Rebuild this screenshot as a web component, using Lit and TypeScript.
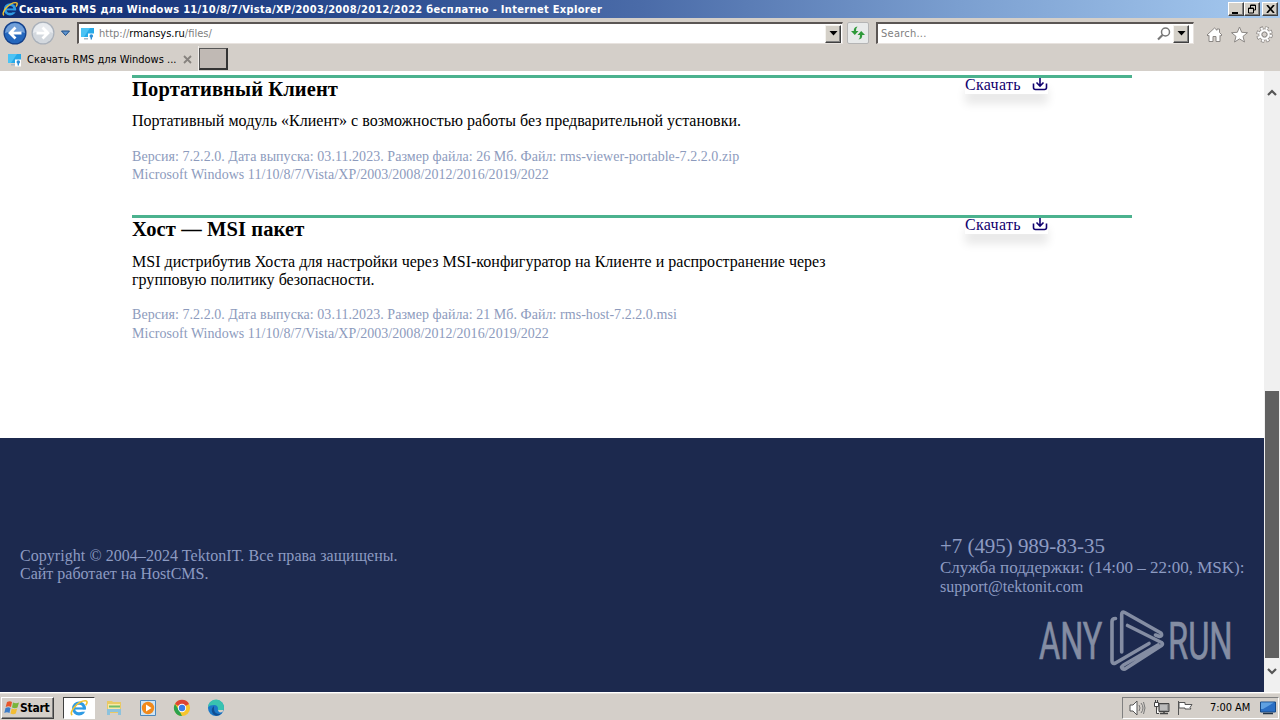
import { LitElement, html, svg, css } from "lit";
import { customElement } from "lit/decorators.js";

const ie = (s: number) => html`<svg width=${s} height=${s} viewBox="0 0 20 20">
  <circle cx="10" cy="10.500" r="6" fill="none" stroke="#2f9be4" stroke-width="3.500"/>
  <path d="M11 11.500h8v2.600h-8z" fill=${s > 16 ? "#fff" : "#12307a"}/><path d="M5 9.300h12.500v2.400H5z" fill="#2f9be4"/>
  <path d="M2.500 18C-2 15 9 2 17 2c3 0 2 3 .5 5" fill="none" stroke="#f2c230" stroke-width="1.800"/></svg>`;

const site = html`<svg width="16" height="16" viewBox="0 0 16 16">
  <path d="M1 2h13v9H1z" fill="#26a9e8"/><path d="M1 2h9L4 11H1z" fill="#4cc3f4"/><path d="M4 12h4v1.500H4z" fill="#a9b8c6"/>
  <path d="M8 7.500h6v7H8z" fill="#fff"/><circle cx="11.300" cy="10" r="1.800" fill="#2d8fd8"/><path d="M10.600 11h1.400v2.500h-1.400z" fill="#2d8fd8"/></svg>`;

const dropArrow = html`<svg width="9" height="5" viewBox="0 0 9 5"><path d="M.5 0h8L4.500 4.500z" fill="#000"/></svg>`;

const navRound = (back: boolean) => svg`
  <circle cx="12" cy="12" r="11.500" fill=${back ? "#143f88" : "#a9b0ba"}/>
  <circle cx="12" cy="12" r="10.300" fill=${back ? "#2467bd" : "#d3d8de"}/>
  <path d="M2 12a10 10 0 0 1 20 0q-10-4-20 0z" fill=${back ? "#719fd8" : "#e8ebef"}/>
  <path d=${back ? "M18.500 12H7m5.500-5.500L7 12l5.500 5.500" : "M5.500 12H17m-5.500-5.500L17 12l-5.500 5.500"} fill="none" stroke="#fff" stroke-width="2.800"/>`;

const download = html`<svg width="16" height="14" viewBox="0 0 16 14"><path d="M1.500 5.500V9.500q0 2 2 2h9q2 0 2-2V5.500M8 0v8M4.500 4.500L8 8l3.500-3.500" fill="none" stroke="#10006e" stroke-width="1.600"/></svg>`;

interface Product { title: string; text: string[]; meta: string[]; cls: string; }

const products: Product[] = [
  { title: "Портативный Клиент", cls: "p1",
    text: ["Портативный модуль «Клиент» с возможностью работы без предварительной установки."],
    meta: ["Версия: 7.2.2.0. Дата выпуска: 03.11.2023. Размер файла: 26 Мб. Файл: rms-viewer-portable-7.2.2.0.zip", "Microsoft Windows 11/10/8/7/Vista/XP/2003/2008/2012/2016/2019/2022"] },
  { title: "Хост — MSI пакет", cls: "p2",
    text: ["MSI дистрибутив Хоста для настройки через MSI-конфигуратор на Клиенте и распространение через", "групповую политику безопасности."],
    meta: ["Версия: 7.2.2.0. Дата выпуска: 03.11.2023. Размер файла: 21 Мб. Файл: rms-host-7.2.2.0.msi", "Microsoft Windows 11/10/8/7/Vista/XP/2003/2008/2012/2016/2019/2022"] },
];

@customElement("app-root")
export class AppRoot extends LitElement {
  static styles = css`
    :host { display: flex; flex-direction: column; width: 1280px; height: 720px; overflow: hidden; background: #d4cfc9;
      font-family: "DejaVu Sans Condensed", "DejaVu Sans", sans-serif; font-stretch: condensed; font-size: 11px; color: #000; }
    * { box-sizing: border-box; }
    svg { display: block; flex: none; }
    .title { height: 18px; flex: none; display: flex; align-items: center; background: linear-gradient(90deg, #0f2a70, #26478c 25%, #4a6ba8 50%, #7b9fd0 75%, #a6caf0); color: #fff; font-weight: bold; padding: 0 2px; white-space: nowrap; }
    .title .cap { margin-left: 1px; flex: 1; letter-spacing: .325px; }
    .wbtn { width: 16px; height: 14px; background: #d4d0c8; border: 1px solid; border-color: #fff #404040 #404040 #fff; box-shadow: inset -1px -1px #808080; display: flex; align-items: center; justify-content: center; }
    .wbtn.close { margin-left: 2px; }
    .bar { height: 28px; flex: none; display: flex; align-items: center; padding: 2px 7px 0 3px; }
    .back { margin-right: 5px; }
    .field { height: 22px; flex: none; background: #fff; border: 1px solid; border-width: 2px 1px 1px 2px; border-color: #5b5654 #e8e3df #e8e3df #5b5654; display: flex; align-items: center; color: #808080; }
    .addr { width: 766px; margin-left: 7px; padding-left: 1px; padding-right: 1px; }
    .addr .url { margin-left: 3px; flex: 1; }
    .addr b { font-weight: normal; color: #000; }
    .drop { width: 16px; height: 18px; background: #d4d0c8; border: 1px solid; border-color: #f4f2ee #404040 #404040 #f4f2ee; box-shadow: inset -1px -1px #808080; display: flex; align-items: center; justify-content: center; }
    .go { width: 22px; height: 22px; margin: 0 7px 0 4px; border: 1px solid #b5b5b5; border-radius: 2px; background: #e8eaea; display: flex; align-items: center; justify-content: center; }
    .search { width: 318px; padding: 0 4px 0 3px; }
    .search .ph { flex: 1; letter-spacing: .25px; }
    .tools { display: flex; gap: 8px; margin-left: 12px; padding-top: 3px; }
    .tabs { height: 25px; flex: none; display: flex; }
    .tab { width: 199px; display: flex; align-items: center; padding: 2px 6px 0 7px; border-right: 1px solid #f2efec; }
    .tab .name { margin-left: 4px; flex: 1; white-space: nowrap; }
    .newtab { width: 29px; height: 22px; margin-top: 2px; background: #c0b9b4; border: 1px solid; border-width: 1px 2px 2px 1px; border-color: #555 #333 #333 #555; }
    .view { height: 621px; flex: none; display: flex; }
    .page { width: 1264px; background: #fff; display: flex; flex-direction: column; font-family: "Liberation Serif", serif; font-stretch: normal; white-space: nowrap; }
    .list { height: 367px; padding: 4px 132px 0; }
    .item { height: 140px; border-top: 3px solid #4bb28e; display: flex; justify-content: space-between; }
    .h { font-size: 20.500px; line-height: 23px; font-weight: bold; letter-spacing: .1px; }
    .desc { font-size: 16px; line-height: 18px; margin-top: 11px; letter-spacing: .02px; }
    .meta { font-size: 14px; line-height: 18px; color: #8d9bbd; margin-top: 18px; letter-spacing: .045px; }
    .p2 .desc { margin-top: 12px; letter-spacing: .01px; }
    .p2 .meta { margin-top: 17px; line-height: 18.500px; }
    .dl { width: 83px; height: 16px; margin-right: 84px; display: flex; justify-content: space-between; align-items: flex-start; color: #10006e; font-size: 16px; line-height: 14px; letter-spacing: .3px; box-shadow: 0 10px 10px rgba(0, 0, 0, .09); }
    .foot { height: 254px; background: #1c294e; color: #8d9bc2; display: flex; justify-content: space-between; font-size: 16px; }
    .copy { padding: 109px 0 0 20px; line-height: 18px; letter-spacing: .05px; }
    .cms { letter-spacing: 0; }
    .contact { width: 324px; padding-top: 97px; line-height: 20px; }
    .phone { font-size: 21px; line-height: 23px; letter-spacing: -.05px; }
    .supp { font-size: 17px; line-height: 19px; }
    .logo { margin: 11px 0 0 97px; }
    .scroll { width: 16px; background: #f0f0f0; display: flex; flex-direction: column; align-items: center; padding: 17px 0 16px; }
    .thumb { width: 14px; height: 267px; flex: none; background: #606060; margin: 294px 0 9px; }
    .task { height: 28px; flex: none; border-top: 1px solid #fff; box-shadow: inset 0 1px #e6e2dc; display: flex; align-items: center; padding: 2px 1px 0; }
    .start { width: 53px; height: 22px; border: 1px solid; border-color: #fff #404040 #404040 #fff; box-shadow: inset -1px -1px #808080; font-weight: bold; font-size: 12px; display: flex; align-items: center; padding-left: 2px; gap: 0; letter-spacing: -.25px; }
    .active { width: 32px; height: 22px; margin: 0 10px 0 9px; background: #fff; border: 1px solid; border-color: #404040 #fff #fff #404040; display: flex; align-items: center; justify-content: center; }
    .pins { display: flex; gap: 16px; flex: 1; }
    .tray { width: 157px; height: 22px; border: 1px solid; border-color: #808080 #fff #fff #808080; display: flex; align-items: center; padding: 0 2px 0 5px; gap: 7px; }
    .clock { margin: 0 0 0 9px; white-space: nowrap; flex: 1; letter-spacing: -.05px; }
  `;

  render() {
    return html`
      <div class="title">${ie(16)}<span class="cap">Скачать RMS для Windows 11/10/8/7/Vista/XP/2003/2008/2012/2022 бесплатно - Internet Explorer</span>
        <span class="wbtn"><svg width="10" height="9"><path d="M1 7h6v2H1z"/></svg></span>
        <span class="wbtn"><svg width="10" height="10"><path d="M3.500 4V1h5v5H7M3 1.500h6M1.500 4h5v5h-5zM1 4.500h6" fill="none" stroke="#000"/></svg></span>
        <span class="wbtn close"><svg width="9" height="8"><path d="M1 0l7 8M8 0L1 8" stroke="#000" stroke-width="1.700"/></svg></span>
      </div>
      <div class="bar">
        <svg class="back" width="53" height="26" viewBox="0 0 53 26"><g transform="translate(0 1)">${navRound(true)}</g><g transform="translate(28 1)">${navRound(false)}</g></svg>
        <svg width="9" height="7"><path d="M.5 1h8L4.500 5.500z" fill="#5f94cf" stroke="#1c4d86"/></svg>
        <div class="field addr">${site}<span class="url">http://<b>rmansys.ru</b>/files/</span><span class="drop">${dropArrow}</span></div>
        <div class="go"><svg width="16" height="16" viewBox="0 0 16 16"><path d="M7.500 1.500Q3.500 2 3.800 6H1L4.800 10 8.500 6H6Q5.800 3 7.500 1.500zM8.500 14.500q4-.5 3.700-4.500H15L11.200 6 7.500 10H10q.2 3-1.500 4.500z" fill="#2f9a3a"/></svg></div>
        <div class="field search"><span class="ph">Search...</span>
          <svg width="16" height="14"><circle cx="8.500" cy="5" r="4" fill="none" stroke="#777" stroke-width="1.500"/><path d="M5.500 8L1 12.500" stroke="#777" stroke-width="2.200"/></svg>
          <span class="drop">${dropArrow}</span></div>
        <div class="tools">
          <svg width="17" height="17" viewBox="0 0 17 17"><path d="M1 9l7.500-7L11 4.300V3h2.500v3.500L16 9l-1.200 1L14 9.300V15.500h-4V10.500H7v5H3V9.300L2 10z" fill="#fff" stroke="#8b8784"/></svg>
          <svg width="17" height="17" viewBox="0 0 17 17"><path d="M8.500 1l2.200 5.300 5.800.4-4.500 3.700 1.500 5.600-5-3.100L3.500 16 5 10.400.5 6.700l5.800-.4z" fill="#fff" stroke="#8b8784"/></svg>
          <svg width="17" height="17" viewBox="0 0 17 17"><circle cx="8.500" cy="8.500" r="6.500" fill="none" stroke="#8b8784" stroke-width="3.600" stroke-dasharray="3 2.105"/><circle cx="8.500" cy="8.500" r="4.500" fill="#fff" stroke="#8b8784" stroke-width="3"/><circle cx="8.500" cy="8.500" r="6.300" fill="none" stroke="#fff" stroke-width="2.400" stroke-dasharray="2 2.948" stroke-dashoffset="-.4"/><circle cx="8.500" cy="8.500" r="4.200" fill="none" stroke="#fff" stroke-width="2.200"/><circle cx="8.500" cy="8.500" r="2.500" fill="#d4cfca" stroke="#8b8784"/></svg>
        </div>
      </div>
      <div class="tabs">
        <div class="tab">${site}<span class="name">Скачать RMS для Windows ...</span><svg width="9" height="9"><path d="M1 1l7 7M8 1L1 8" stroke="#86827e" stroke-width="1.800"/></svg></div>
        <div class="newtab"></div>
      </div>
      <div class="view">
        <div class="page">
          <div class="list">${products.map(p => html`<div class="item ${p.cls}">
            <div><div class="h">${p.title}</div>
              <div class="desc">${p.text.map(t => html`<div>${t}</div>`)}</div>
              <div class="meta">${p.meta.map(t => html`<div>${t}</div>`)}</div></div>
            <div class="dl"><span>Скачать</span>${download}</div></div>`)}</div>
          <div class="foot">
            <div class="copy"><div>Copyright © 2004–2024 TektonIT. Все права защищены.</div><div class="cms">Сайт работает на HostCMS.</div></div>
            <div class="contact"><div class="phone">+7 (495) 989-83-35</div><div class="supp">Служба поддержки: (14:00 – 22:00, MSK):</div><div class="mail">support@tektonit.com</div>
              <svg class="logo" width="210" height="68" viewBox="1037 608 210 68" fill="#848da3">
                <g stroke="#848da3" stroke-width=".7" font-family="Roboto" font-size="51.500">
                <text transform="translate(1039 659) scale(.63 1)">ANY</text>
                <text transform="translate(1168 659) scale(.635 1)">RUN</text></g>
                <g fill="none" stroke="#848da3" stroke-width="3.600" stroke-linejoin="round" stroke-linecap="round">
                  <path d="M1115.500 618.500q-3.500 0-3.500 3V661q0 3.500 3.500 2L1149 643.500"/>
                  <path d="M1121.700 652V614.500q0-3.500 3-2L1161 633q2 3-1.500 3.500l-4-1.500"/>
                  <path d="M1127.500 625.500l34 17q2 1.500 0 3L1125 669q-2.500.5-3.500-2l2-2L1158 645"/>
                </g></svg>
            </div>
          </div>
        </div>
        <div class="scroll">
          <svg width="12" height="9"><path d="M2 7l4-4 4 4" fill="none" stroke="#555" stroke-width="2.200"/></svg>
          <div class="thumb"></div>
          <svg width="12" height="9"><path d="M2 2l4 4 4-4" fill="none" stroke="#555" stroke-width="2.200"/></svg>
        </div>
      </div>
      <div class="task">
        <div class="start"><svg width="16" height="16" viewBox="0 0 16 16"><path d="M3 2q3-1.500 5 0L7 7Q4.500 5.500 1.700 7z" fill="#e8562a"/><path d="M9 2.500q3 1.500 6 0L13.500 7.500Q11 9 8 7.500z" fill="#79b53c"/><path d="M1.500 8q3-1.500 5 0l-1 5Q3 11.500.3 13z" fill="#3b7cc9"/><path d="M7.700 8.500q3 1.500 5.500 0l-1.400 5q-2.600 1.500-5.300 0z" fill="#f3bd34"/></svg><span>Start</span></div>
        <div class="active">${ie(18)}</div>
        <div class="pins">
          <svg width="18" height="18" viewBox="0 0 18 18"><path d="M2 2h5l1 1h8v11H2z" fill="#e9c964"/><path d="M3 5h12v6H3z" fill="#f8e8a6"/><path d="M4 6.500h11v2H4z" fill="#72bd67"/><path d="M2 10h14v6h-3v-3H5v3H2z" fill="#8cc2dd"/></svg>
          <svg width="18" height="18" viewBox="0 0 18 18"><path d="M1.500 1.500h15v15h-15z" fill="#cfe5f5" stroke="#4c88bd"/><circle cx="9" cy="9" r="6.200" fill="#f18a1c"/><path d="M7 5.500L12.500 9 7 12.500z" fill="#fff"/></svg>
          <svg width="18" height="18" viewBox="0 0 18 18"><circle cx="9" cy="9" r="8" fill="#f7c52d"/><path d="M9 9L2 5a8 8 0 0 1 14 0z" fill="#dd4434"/><path d="M2 5l4 6 3 6A8 8 0 0 1 2 5z" fill="#2ba24c"/><circle cx="9" cy="9" r="4.200" fill="#fff"/><circle cx="9" cy="9" r="3.200" fill="#3b7de8"/></svg>
          <svg width="18" height="18" viewBox="0 0 18 18"><circle cx="9" cy="9" r="8" fill="#1b78c8"/><path d="M1 8a8 8 0 0 1 16 1q0 3-4 3-3 0-2-2 0-4-4-4T1 8z" fill="#38c3b0"/><path d="M7 10q0 5 6 5l2-1q-5 5-9 1-3-5 1-8z" fill="#124d91"/><path d="M11 11h5.500q-.5 2.500-3 2.500-2 0-2.500-2.500z" fill="#d4d0c8"/></svg>
        </div>
        <div class="tray">
          <svg width="18" height="16" viewBox="0 0 18 16"><path d="M2 5h3l4-4v14l-4-4H2z" fill="#fff" stroke="#555"/><path d="M11 5q2 3 0 6M13 3q4 5 0 10M15.500 2q3 6 0 12" fill="none" stroke="#777"/></svg>
          <svg width="17" height="16" viewBox="0 0 17 16"><path d="M6 3.500h10v8H6z" fill="#999" stroke="#444"/><path d="M7 5h7v5H7z" fill="#bbb"/><path d="M7 13.500h8M11 12v2" stroke="#444" stroke-width="1.500"/><path d="M1.500 2.500h4v4h-4zM3.500 6.500v7H6M2.500 0v2M4.500 0v2" fill="#fff" stroke="#444"/></svg>
          <svg width="17" height="16" viewBox="0 0 17 16"><path d="M1.500 1v14M2 2.500h6v2h7l-2 3 1 1.500H8V8H2z" fill="#fff" stroke="#555"/></svg>
          <span class="clock">7:00 AM</span>
          <svg width="16" height="14" viewBox="0 0 16 14"><path d="M.5 1h15v10H.5z" fill="#2b6fc4" stroke="#174a86"/><path d="M1 1.500h13L3 8H1z" fill="#5fa1e2"/><path d="M3 12.500h10" stroke="#234" stroke-width="1.500"/></svg>
        </div>
      </div>`;
  }
}
